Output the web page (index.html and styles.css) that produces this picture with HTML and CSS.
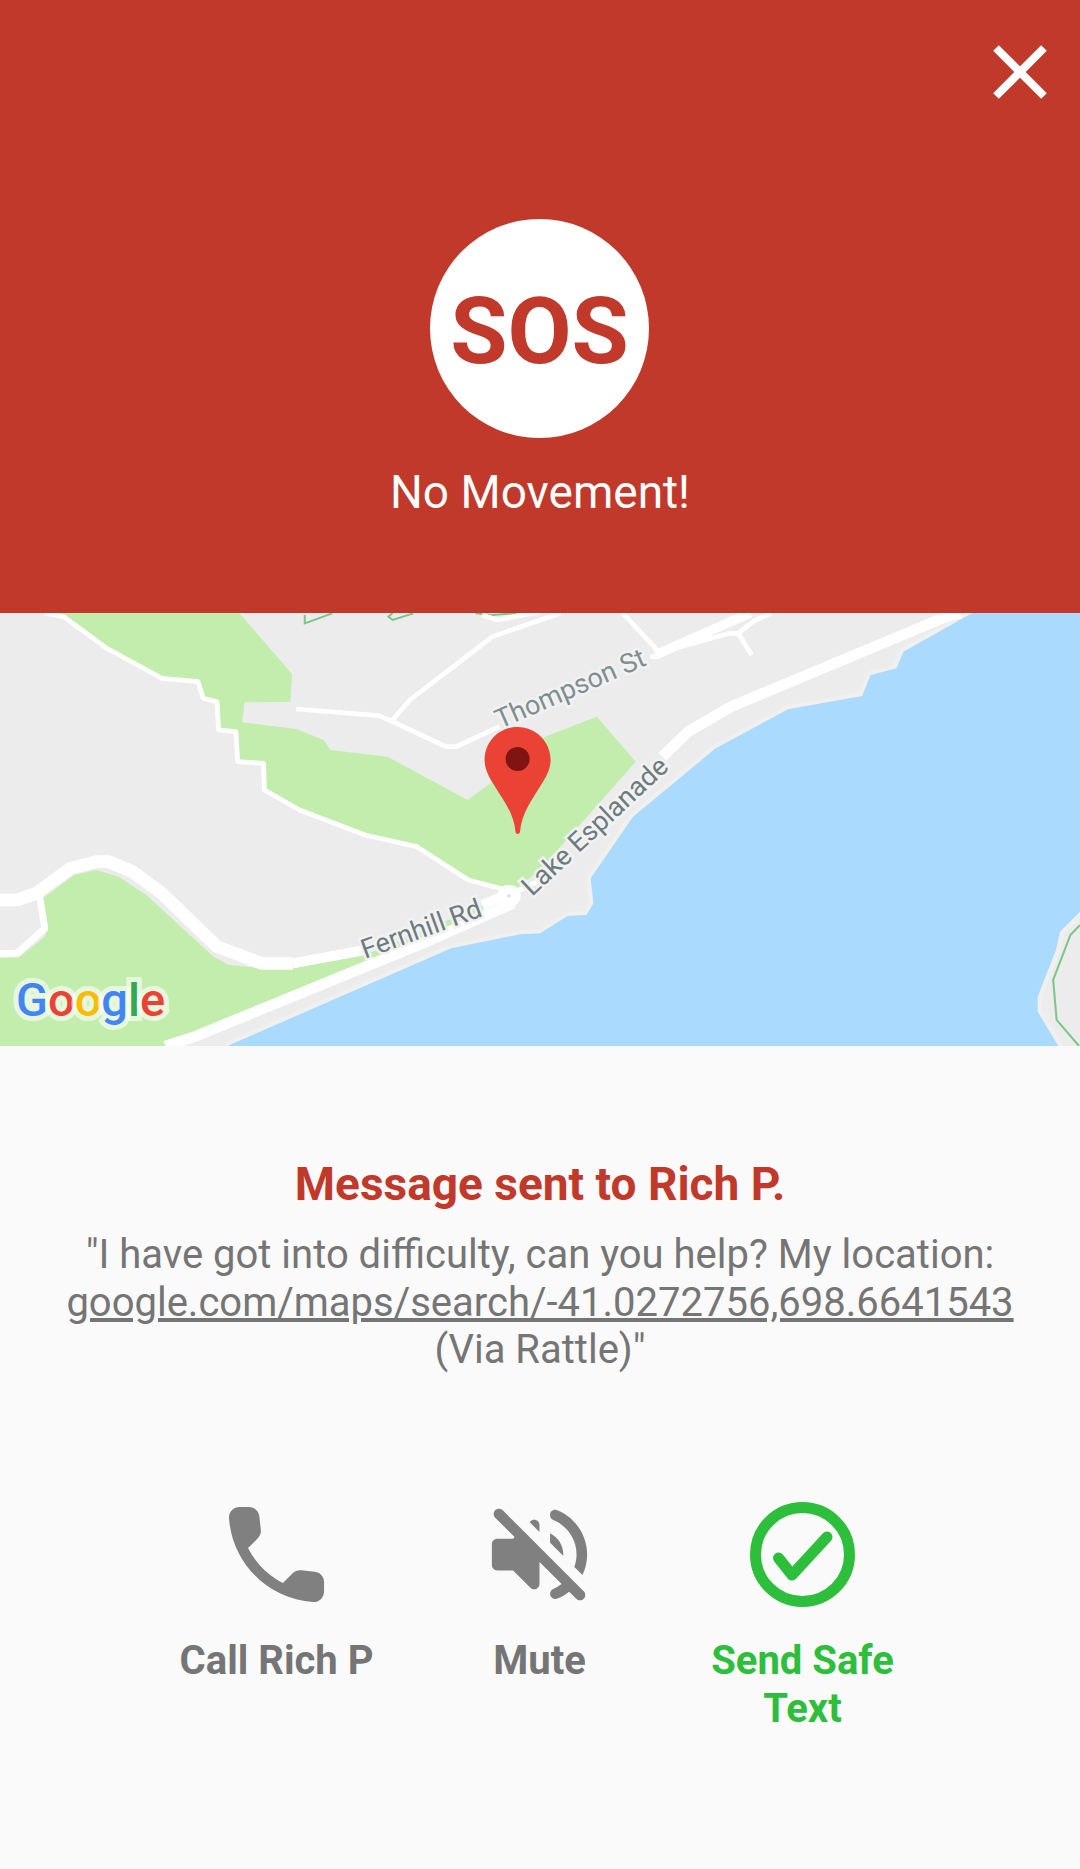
FILE: index.html
```html
<!DOCTYPE html>
<html lang="en">
<head>
    <meta charset="UTF-8">
    <meta name="viewport" content="width=device-width, initial-scale=1.0">
    <title>SOS</title>
    <link rel="stylesheet" href="styles.css">
</head>
<body>

    <header class="alert">
        <div class="close-row">
            <svg class="close-icon" viewBox="0 0 54 54">
                <path d="M3 3L51 51M51 3L3 51"/>
            </svg>
        </div>
        <div class="sos-badge">SOS</div>
        <p class="alert-text">No Movement!</p>
    </header>

    <!-- Map -->
    <div class="map">
        <svg class="map-svg" viewBox="0 0 1080 433">
            <rect width="1080" height="433" fill="#ececec"/>
            <!-- shapes traced in 3136 wide units -->
            <g transform="scale(.3444 .3333) translate(0 -39)">
                <path class="park" d="M130 39L185 50L310 145L470 235L575 245L590 295L630 305L635 390L685 395L690 485L765 490L768 570L870 630L1060 705L1210 740L1360 840L1480 880L1568 810L1846 485L1733 350L1583 410L1430 545L1358 600L1125 470L960 450L940 420L860 387L703 367L710 307L843 305L848 222L695 39Z"/>
                <path class="park" d="M0 1075L55 1072L130 1010L140 985L125 895L215 825L280 810L345 830L425 885L620 1070L665 1095L755 1105L850 1105L1060 1065L1440 900L1250 1020L560 1312L480 1338L0 1338Z"/>
                <path class="water" d="M660 1338L1310 1045L1510 1003L1568 1000L1648 948L1703 945L1723 910L1715 835L1838 650L2078 445L2288 328L2503 288L2528 225L2603 205L2623 155L2823 39L3136 39L3136 935L3078 995L3066 1050L3013 1190L3013 1235L3073 1338Z"/>
                <path class="trail" d="M965 40L885 70L885 45M1200 40L1140 60L1128 50L1140 39M1380 40L1430 45L1500 39M3136 975L3108 1005L3058 1140L3068 1260L3133 1338"/>
                <path class="road thin" d="M130 39L185 50L310 145L470 235L575 245L590 295L630 305L635 390L685 395L690 485L765 490L768 570L870 630L1060 705L1210 740L1360 840L1470 870"/>
                <path class="road thin" d="M860 327L1100 347L1140 365L1295 440L1325 440L1450 380M1888 170L1913 170M1140 360L1190 300L1430 110L1628 39M1400 45L1445 60L1568 35M1808 39L1908 150M1960 145L2118 100L2143 100L2190 62L2240 39M2143 100L2183 165"/>
                <path class="road mid" d="M1903 165L2178 39"/>
                <path class="road thick" d="M0 900L50 900L105 880L205 805L280 785L315 785L385 815L470 880L630 1040L760 1090L850 1090"/>
                <path class="road thick tail" d="M850 1090L1050 1052M1400 915L1470 885"/>
                <path class="road small" d="M0 1060L50 1060L130 985L115 890"/>
                <path class="road coast" d="M480 1338L560 1312L1250 1020L1490 910"/>
                <path class="road coast" d="M1923 470L1998 395L2123 320L2748 50L2788 39"/>
                <path class="road thin" d="M1490 880L1560 845"/>
                <circle class="junction" cx="1478" cy="888" r="34"/>
                <circle class="junction-dot" cx="1478" cy="888" r="6"/>
            </g>
            <text class="label" x="0" y="0" transform="translate(500 116) rotate(-23.5)">Thompson St</text>
            <text class="label dark" x="0" y="0" transform="translate(365 346) rotate(-20)">Fernhill Rd</text>
            <text class="label dark" x="0" y="0" transform="translate(532 284) rotate(-43)">Lake Esplanade</text>
            <path class="pin" d="M517.6 114C499 114 484.6 129 484.6 147C484.6 156 489 164 494 172C503 187 514 200 515.5 219Q516 221 517.6 221Q519.5 221 520 219C521.5 200 532 187 541 172C546 164 550.6 156 550.6 147C550.6 129 536 114 517.6 114Z"/>
            <circle class="pin-dot" cx="517.6" cy="146" r="12"/>
            <text class="google" x="16" y="403"><tspan fill="#4285f4">G</tspan><tspan fill="#ea4335">o</tspan><tspan fill="#fbbc05">o</tspan><tspan fill="#4285f4">g</tspan><tspan fill="#34a853">l</tspan><tspan fill="#ea4335">e</tspan></text>
        </svg>
    </div>

    <main class="details">
        <h2 class="sent-title">Message sent to Rich P.</h2>
        <p class="sent-body">"I have got into difficulty, can you help? My location:<br><a href="#">google.com/maps/search/-41.0272756,698.6641543</a><br>(Via Rattle)"</p>

        <div class="actions">
            <div class="action">
                <svg class="action-icon" viewBox="0 0 24 24">
                    <path d="M19.23 15.26l-2.54-.29c-.61-.07-1.21.14-1.64.57l-1.84 1.84c-2.83-1.44-5.15-3.75-6.59-6.59l1.85-1.85c.43-.43.64-1.03.57-1.64l-.29-2.52c-.11-1.01-.96-1.77-1.97-1.77H5.03c-1.13 0-2.07.94-2 2.07.53 8.54 7.36 15.36 15.89 15.89 1.13.07 2.07-.87 2.07-2v-1.73c.01-1-.75-1.85-1.76-1.96z"/>
                </svg>
                <span>Call Rich P</span>
            </div>
            <div class="action">
                <svg class="action-icon" viewBox="0 0 24 24">
                    <path d="M3.63 3.63c-.39.39-.39 1.02 0 1.41L7.29 8.7 7 9H4c-.55 0-1 .45-1 1v4c0 .55.45 1 1 1h3l3.29 3.29c.63.63 1.71.18 1.71-.71v-4.17l4.18 4.18c-.49.37-1.02.68-1.6.91-.36.15-.58.53-.58.92 0 .72.73 1.18 1.39.91.8-.33 1.55-.77 2.22-1.31l1.34 1.34c.39.39 1.02.39 1.41 0 .39-.39.39-1.02 0-1.41L5.05 3.63c-.39-.39-1.02-.39-1.42 0zM19 12c0 .82-.15 1.61-.41 2.34l1.53 1.53c.56-1.17.88-2.48.88-3.87 0-3.83-2.4-7.11-5.78-8.4-.59-.23-1.22.23-1.22.86v.19c0 .38.25.71.61.85C17.18 6.54 19 9.06 19 12zm-8.71-6.29l-.17.17L12 7.76V6.41c0-.89-1.08-1.33-1.71-.7zM16.5 12c0-1.77-1.02-3.29-2.5-4.03v1.79l2.48 2.48c.01-.08.02-.16.02-.24z"/>
                </svg>
                <span>Mute</span>
            </div>
            <div class="action safe">
                <svg class="action-icon" viewBox="0 0 127 127">
                    <circle cx="63.5" cy="63.5" r="47"/>
                    <path d="M39.5 67L53 84L88 46"/>
                </svg>
                <span>Send Safe<br>Text</span>
            </div>
        </div>
    </main>

</body>
</html>
```

FILE: styles.css
```css
body {
    margin: 0;
    font-family: Roboto, sans-serif;
    background-color: #fafafa;
}

/* Red alert header */
.alert {
    height: 613px;
    background-color: #c0392b;
    color: #fff;
    display: flex;
    flex-direction: column;
    align-items: center;
}

.close-row {
    align-self: stretch;
    display: flex;
    justify-content: flex-end;
    padding: 45px 33px 0 0;
}

.close-icon {
    width: 54px;
    height: 54px;
    display: block;
}

.close-icon path {
    fill: none;
    stroke: #fff;
    stroke-width: 8;
}

.sos-badge {
    width: 219px;
    height: 219px;
    margin: 120px 1px 0 0;
    border-radius: 50%;
    background-color: #fff;
    color: #c0392b;
    font-size: 93px;
    font-weight: 700;
    line-height: 225px;
    text-align: center;
}

.alert-text {
    margin: 28px 0 0;
    font-size: 46px;
    line-height: 52px;
}

/* Map */
.map {
    height: 433px;
}

.map-svg {
    width: 1080px;
    height: 433px;
    display: block;
}

.park {
    fill: #c2edac;
}

.water {
    fill: #aadafe;
    stroke: #f0f0ee;
    stroke-width: 24;
    paint-order: stroke;
}

.trail {
    fill: none;
    stroke: #7cc68a;
    stroke-width: 6;
}

.road {
    fill: none;
    stroke: #fff;
    stroke-linejoin: round;
}

.road.thin {
    stroke-width: 14;
}

.road.mid {
    stroke-width: 28;
}

.road.small {
    stroke-width: 20;
}

.road.thick {
    stroke-width: 38;
}

.road.thick.tail {
    stroke-width: 30;
}

.road.coast {
    stroke-width: 32;
}

.junction {
    fill: #fff;
}

.junction-dot {
    fill: #e4e4e4;
}

.label {
    font-size: 27px;
    fill: #7f8e93;
    stroke: #f2f2f0;
    stroke-width: 5px;
    paint-order: stroke;
}

.label.dark {
    fill: #6c7b81;
}

.pin {
    fill: #ea4335;
}

.pin-dot {
    fill: #7f1412;
}

.google {
    font-size: 47px;
    font-weight: 500;
    stroke: rgba(255, 255, 255, 0.6);
    stroke-width: 10px;
    paint-order: stroke;
}

/* Message and buttons */
.details {
    display: flex;
    flex-direction: column;
    align-items: center;
    padding-top: 113px;
    text-align: center;
}

.sent-title {
    margin: 0;
    color: #c0392b;
    font-size: 46px;
    font-weight: 700;
    line-height: 50px;
}

.sent-body {
    margin: 22px 0 0;
    color: #757575;
    font-size: 40px;
    line-height: 47.5px;
}

.sent-body a {
    color: inherit;
}

.actions {
    display: grid;
    grid-template-columns: repeat(3, 263px);
    margin: 117px 1px 0 0;
}

.action {
    display: flex;
    flex-direction: column;
    align-items: center;
    color: #757575;
    font-size: 40px;
    font-weight: 700;
    line-height: 48px;
}

.action-icon {
    width: 127px;
    height: 127px;
    margin-bottom: 19px;
    fill: #808080;
}

.safe {
    color: #2dbe3c;
}

.safe .action-icon {
    fill: none;
    stroke: #2dbe3c;
    stroke-width: 11;
    stroke-linecap: round;
    stroke-linejoin: round;
}
```
